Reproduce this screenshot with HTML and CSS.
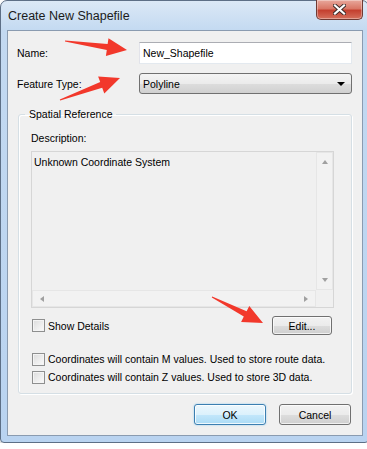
FILE: index.html
```html
<!DOCTYPE html>
<html>
  <head>
    <meta charset="UTF-8" />
    <title>Create New Shapefile</title>
    <link rel="stylesheet" href="styles.css">
  </head>
  <body>
    <div class="window">
      <div class="titlebar">
        <span class="title">Create New Shapefile</span>
        <div class="close">
          <svg width="13" height="11" viewBox="0 0 13 11">
            <path d="M2 1.5 L11 9.5 M11 1.5 L2 9.5" stroke="#3a2a28" stroke-width="4" stroke-linecap="square" />
            <path d="M2 1.5 L11 9.5 M11 1.5 L2 9.5" stroke="#ffffff" stroke-width="2.2" stroke-linecap="square" />
          </svg>
        </div>
      </div>
      <div class="client">
        <div class="row">
          <label for="name">Name:</label>
          <input type="text" id="name" class="field" value="New_Shapefile" />
        </div>
        <div class="row">
          <label>Feature Type:</label>
          <div class="combo">
            <span>Polyline</span>
            <span class="caret"></span>
          </div>
        </div>
        <fieldset class="group">
          <legend>Spatial Reference</legend>
          <div class="desc-label">Description:</div>
          <div class="desc">
            <div class="desc-text">Unknown Coordinate System</div>
            <div class="vscroll">
              <span class="tri up"></span>
              <span class="tri down"></span>
            </div>
            <div class="hscroll">
              <span class="tri left"></span>
              <span class="tri right"></span>
            </div>
            <div class="corner"></div>
          </div>
          <div class="details-row">
            <label class="check"><span class="box"></span>Show Details</label>
            <button class="btn edit">Edit...</button>
          </div>
          <label class="check line-m"><span class="box"></span>Coordinates will contain M values. Used to store route data.</label>
          <label class="check line-z"><span class="box"></span>Coordinates will contain Z values. Used to store 3D data.</label>
        </fieldset>
        <div class="actions">
          <button class="btn default">OK</button>
          <button class="btn">Cancel</button>
        </div>
      </div>
    </div>

    <!-- red markers drawn over the dialog -->
    <svg class="marks" width="367" height="449" viewBox="0 0 367 449">
      <polygon fill="#f2382b" points="64.9,41.5 106.8,50.1 105.9,56.0 127,50 108.5,38.2 107.6,44.1 65.1,40.5" />
      <polygon fill="#f2382b" points="60.2,100.5 102.2,87.7 104.3,93.4 120,78 98.1,76.4 100.2,82.1 59.8,99.5" />
      <polygon fill="#f2382b" points="211.8,297.5 243.8,316.6 241.1,321.9 263,323 249.3,305.9 246.6,311.2 212.2,296.5" />
    </svg>
  </body>
</html>
```

FILE: styles.css
```css
body {
  margin: 0;
  background: #ffffff;
  font-family: "Liberation Sans", Arial, sans-serif;
  font-size: 10.5px;
  color: #000000;
}

.window {
  width: 369px;
  height: 443px;
  box-sizing: border-box;
  border: 1px solid #5d6f86;
  border-radius: 7px 7px 4px 4px;
  background: linear-gradient(#dbe8f6, #c3d9f1 30px, #b9d3f0);
  padding: 0 5px 6px 6px;
  box-shadow: 2px 3px 5px rgba(0, 0, 0, 0.5);
  display: flex;
  flex-direction: column;
}

.titlebar {
  height: 29px;
  display: flex;
  align-items: flex-start;
}
.title {
  margin: 8px 0 0 1px;
  font-size: 12.5px;
  line-height: 15px;
  color: #1b1b1b;
}
.close {
  margin: -1px 0 0 auto;
  width: 47px;
  height: 20px;
  box-sizing: border-box;
  border: 1px solid #6f3a33;
  border-top: none;
  border-radius: 0 0 5px 5px;
  background: linear-gradient(#e8a89c, #d97766 45%, #c4402f 55%, #d5705c);
  box-shadow: inset 0 0 0 1px rgba(255, 255, 255, 0.35);
  display: flex;
  align-items: center;
  justify-content: center;
}

.client {
  flex: 1;
  background: #f0f0f0;
  border: 1px solid #8a9bb0;
  padding: 11px 10px 0 9px;
}

.row {
  display: grid;
  grid-template-columns: 122px 1fr;
  align-items: center;
}
.row + .row {
  margin-top: 9px;
}
.field {
  height: 22px;
  box-sizing: border-box;
  margin: 0;
  border: 1px solid;
  border-color: #abadb3 #e3e9ef #e3e9ef #e2e3ea;
  padding: 0 3px;
  font-family: inherit;
  font-size: 10.5px;
  background: #ffffff;
  outline: none;
}
.combo {
  height: 21px;
  box-sizing: border-box;
  border: 1px solid #707070;
  border-radius: 3px;
  background: linear-gradient(#f4f4f4, #ebebeb 50%, #dddddd 51%, #d0d0d0);
  padding: 0 6px 0 3px;
  display: flex;
  align-items: center;
  justify-content: space-between;
}
.caret {
  width: 0;
  height: 0;
  border-left: 4px solid transparent;
  border-right: 4px solid transparent;
  border-top: 4px solid #000000;
}

.group {
  margin: 14px 0 0 1px;
  border: 1px solid #d5dfe5;
  border-radius: 3px;
  box-shadow: inset 1px 1px 0 #ffffff, 1px 1px 0 #ffffff;
  padding: 0 17px 8px 12px;
  min-width: 0;
}
.group legend {
  margin-left: -6px;
  padding: 0 4px;
  line-height: 13px;
}
.desc-label {
  margin: 11px 0 6px;
  line-height: 13px;
}
.desc {
  height: 157px;
  box-sizing: border-box;
  border: 1px solid #d6d6d6;
  display: grid;
  grid-template-columns: 1fr 17px;
  grid-template-rows: 1fr 17px;
}
.desc-text {
  padding: 4px 2px;
  line-height: 13px;
}
.vscroll,
.hscroll {
  background: #f2f2f2;
  box-sizing: border-box;
  border: 1px solid #e6e6e6;
}
.vscroll {
  display: flex;
  flex-direction: column;
  justify-content: space-between;
  align-items: center;
  padding: 7px 0;
}
.hscroll {
  display: flex;
  justify-content: space-between;
  align-items: center;
  padding: 0 7px;
}
.corner {
  background: #f0f0f0;
}
.tri {
  width: 0;
  height: 0;
  border: 3px solid transparent;
}
.tri.up {
  border-bottom: 4px solid #a0a0a0;
  border-top: none;
}
.tri.down {
  border-top: 4px solid #a0a0a0;
  border-bottom: none;
}
.tri.left {
  border-right: 4px solid #a0a0a0;
  border-left: none;
}
.tri.right {
  border-left: 4px solid #a0a0a0;
  border-right: none;
}

.details-row {
  display: flex;
  justify-content: space-between;
  align-items: center;
  margin-top: 8px;
}
.check {
  display: flex;
  align-items: center;
  gap: 3px;
  height: 16px;
  padding-left: 1px;
  white-space: nowrap;
}
.box {
  flex: none;
  width: 13px;
  height: 13px;
  box-sizing: border-box;
  border: 1px solid #8e8f8f;
  background: linear-gradient(135deg, #dcdcdc, #fbfbfb);
  box-shadow: inset 0 0 0 1px #f4f4f4;
}
.line-m {
  margin-top: 16px;
}
.line-z {
  margin-top: 2px;
}

.btn {
  box-sizing: border-box;
  border: 1px solid #707070;
  border-radius: 3px;
  background: linear-gradient(#f2f2f2, #ebebeb 50%, #dddddd 51%, #cfcfcf);
  box-shadow: inset 0 0 0 1px rgba(255, 255, 255, 0.7);
  font-family: inherit;
  font-size: 10.5px;
  color: #000000;
  padding: 0;
}
.edit {
  width: 60px;
  height: 19px;
  margin-right: 2px;
}
.actions {
  display: flex;
  justify-content: flex-end;
  gap: 13px;
  margin: 10px 1px 0 0;
}
.actions .btn {
  width: 72px;
  height: 21px;
}
.btn.default {
  border-color: #3c7fb1;
  background: linear-gradient(#ecf7fd, #dcf1fc 50%, #c3e7fb 51%, #abdbf5);
  box-shadow: inset 0 0 0 1px rgba(255, 255, 255, 0.8), 0 0 2px #8ccbf0;
}

.marks {
  position: absolute;
  top: 0;
  left: 0;
  pointer-events: none;
}
```
